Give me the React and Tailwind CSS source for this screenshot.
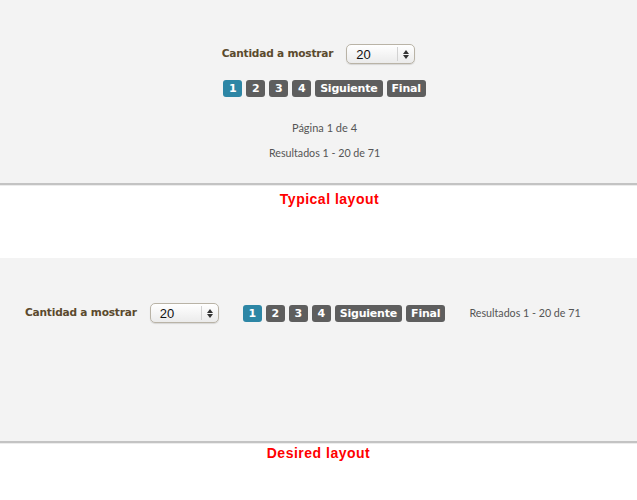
function Select() {
  return (
    <div className="flex items-center w-[69px] h-[20px] rounded-[5px] border border-[#b9b3a6] bg-[linear-gradient(#ffffff,#ebebeb)] shadow-[0_1px_1px_rgba(0,0,0,0.12)]">
      <span className="flex-1 pl-[9px] text-[13px] leading-none text-[#111] font-['Liberation_Sans',sans-serif]">
        20
      </span>
      <span className="w-px h-[14px] bg-[#d2d2d2]" />
      <span className="w-[16px] flex flex-col items-center gap-[1px]">
        <span className="w-0 h-0 border-x-[3px] border-x-transparent border-b-[4px] border-b-[#333]" />
        <span className="w-0 h-0 border-x-[3px] border-x-transparent border-t-[4px] border-t-[#333]" />
      </span>
    </div>
  );
}

function Pager() {
  const pages = ["1", "2", "3", "4", "Siguiente", "Final"];
  return (
    <div className="flex gap-[4px]">
      {pages.map((p, i) => (
        <span
          key={p}
          className={
            "h-[17px] min-w-[19px] px-[5px] rounded-[3px] flex items-center justify-center text-white text-[11px] font-bold leading-none font-['DejaVu_Sans',sans-serif] tracking-[-0.2px] " +
            (i === 0 ? "bg-[#2d86a5]" : "bg-[#5e5e5e]")
          }
        >
          {p}
        </span>
      ))}
    </div>
  );
}

function Label() {
  return (
    <span className="text-[10.6px] font-bold text-[#5b4a2d] font-['DejaVu_Sans',sans-serif] tracking-[-0.2px]">
      Cantidad a mostrar
    </span>
  );
}

function Caption({ children, first }) {
  return (
    <div className="border-t-2 border-[#c3c3c3]">
      <div className="h-px bg-[#ececec]" />
      <div
        className={
          "text-center text-[14px] font-bold text-[#ff0000] font-['Liberation_Sans',sans-serif] tracking-[0.5px] " +
          (first ? "pl-[22px] leading-[26px]" : "leading-[18px]")
        }
      >
        {children}
      </div>
    </div>
  );
}

export default function App() {
  return (
    <div className="w-[637px] h-[500px] bg-white overflow-hidden">
      <div className="h-[183px] bg-[#f3f3f3] flex flex-col items-center pt-[44px]">
        <div className="flex items-center gap-[13px]">
          <Label />
          <Select />
        </div>
        <div className="flex flex-col items-center pl-[12px]">
          <div className="mt-[16px]">
            <Pager />
          </div>
          <div className="mt-[23px] text-[11px] leading-[16px] text-[#555] font-['Lato',sans-serif]">
            Página 1 de 4
          </div>
          <div className="mt-[9px] text-[10.7px] leading-[16px] text-[#555] font-['Lato',sans-serif]">
            Resultados 1 - 20 de 71
          </div>
        </div>
      </div>
      <Caption first>Typical layout</Caption>
      <div className="h-[46px]" />
      <div className="h-[183px] bg-[#f3f3f3] flex items-start pt-[45px] pl-[25px]">
        <div className="flex items-center">
          <Label />
          <div className="ml-[13px]">
            <Select />
          </div>
          <div className="ml-[24px]">
            <Pager />
          </div>
          <span className="ml-[24px] text-[10.7px] text-[#555] font-['Lato',sans-serif]">
            Resultados 1 - 20 de 71
          </span>
        </div>
      </div>
      <Caption>Desired layout</Caption>
    </div>
  );
}
